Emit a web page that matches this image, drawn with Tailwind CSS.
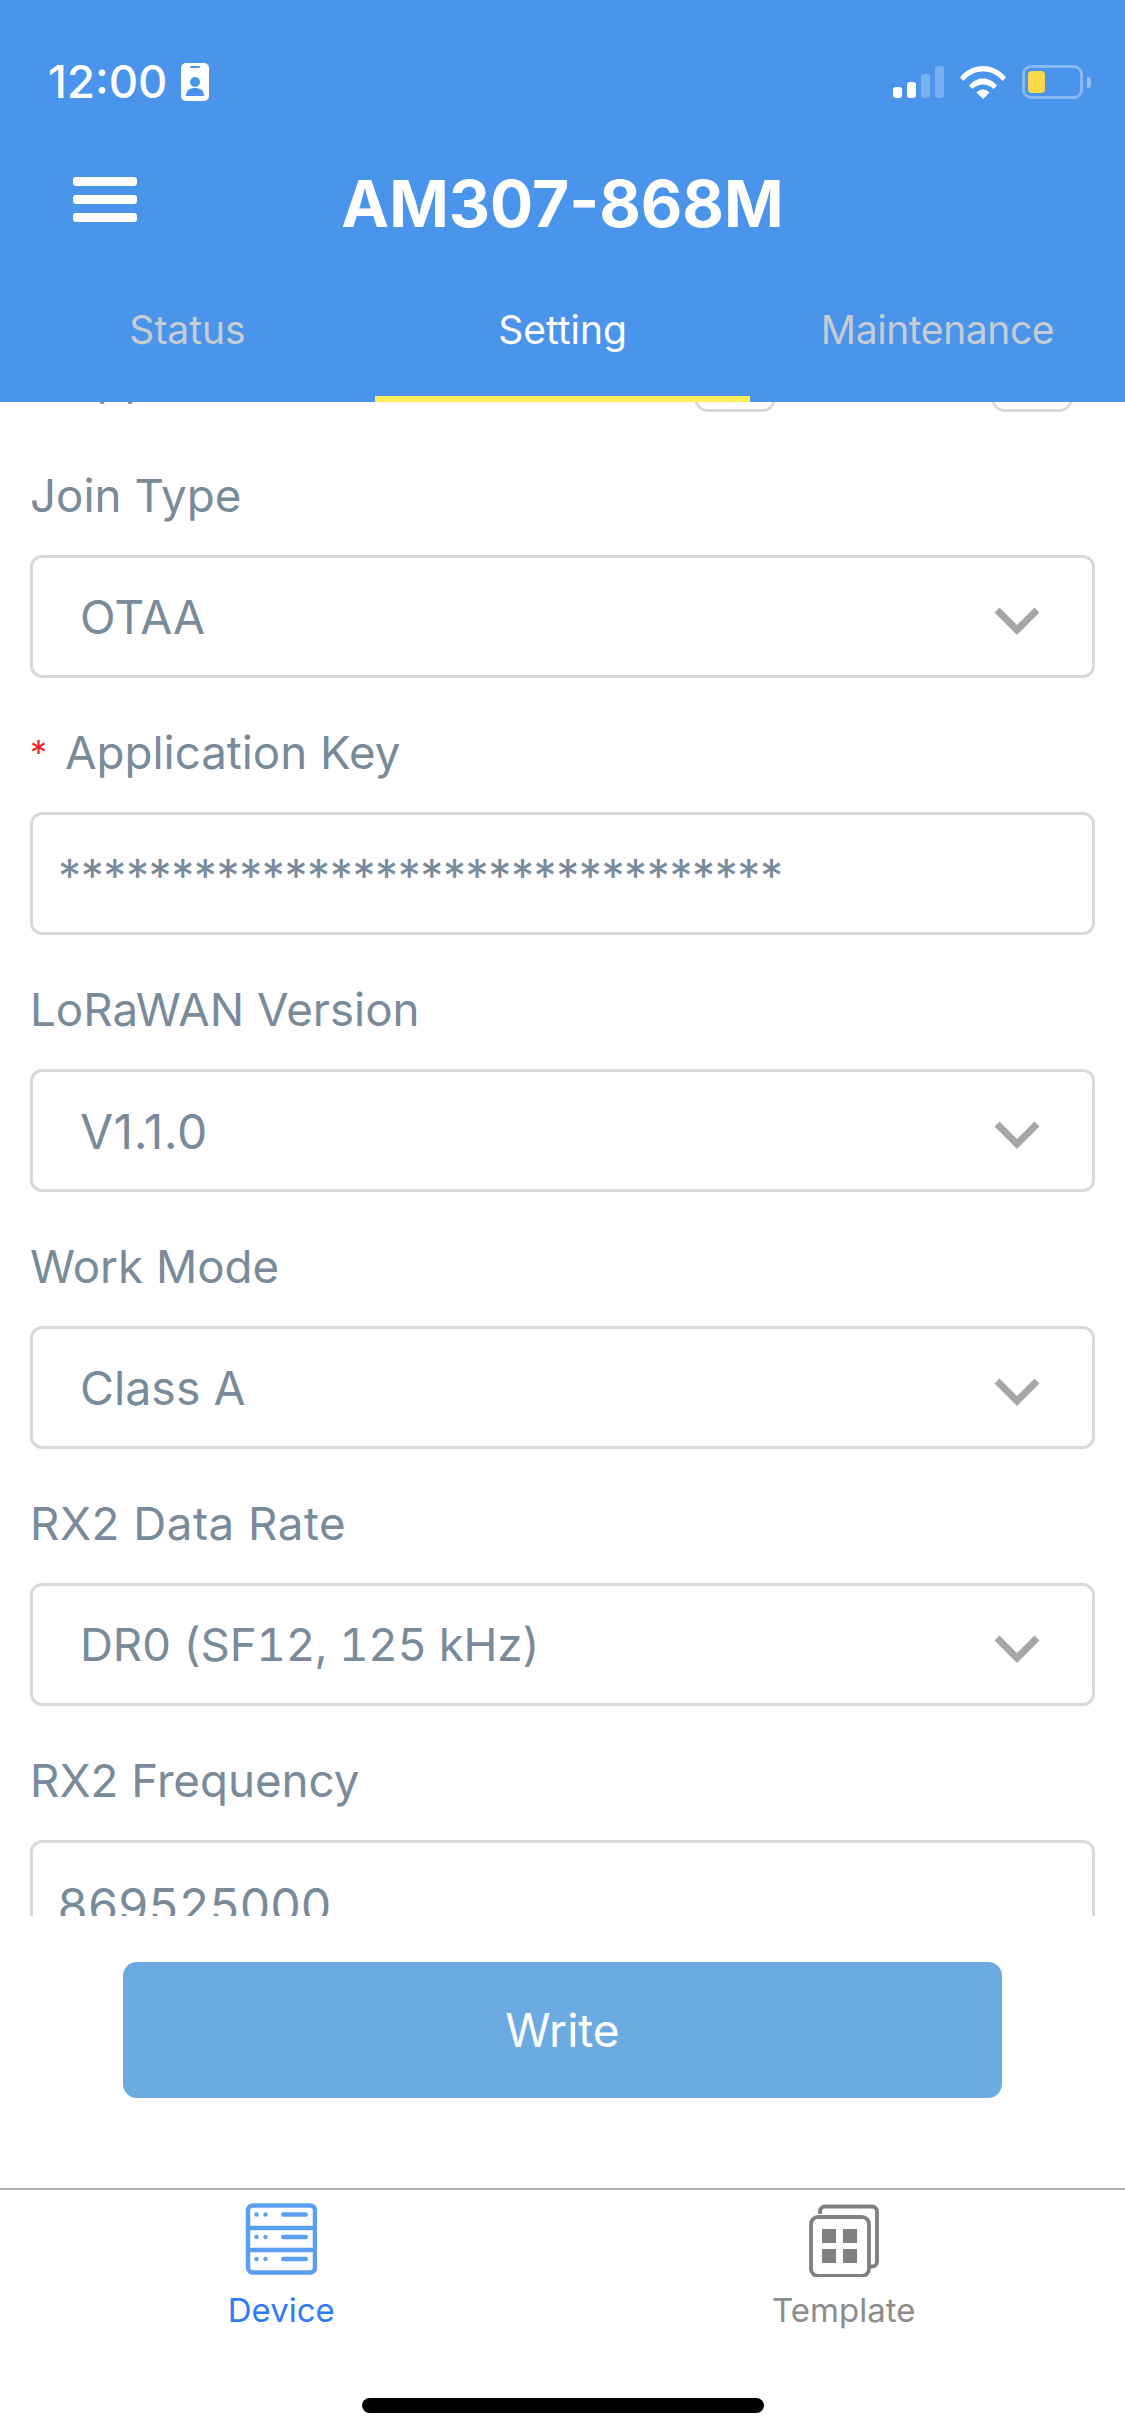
<!doctype html>
<html><head><meta charset="utf-8"><script src="https://cdn.jsdelivr.net/npm/@tailwindcss/browser@4"></script></head>
<body class="m-0">
<div class="w-[1125px] h-[2436px] bg-white flex flex-col overflow-hidden font-['Inter','Liberation_Sans',sans-serif]">
  <header class="h-[402px] bg-[#4a94ec] shrink-0 flex flex-col z-10">
    <div class="h-[130px] pl-[48px] pr-[34px] pt-[59px] flex items-start justify-between">
      <div class="flex items-center gap-[14px] text-white">
        <span class="text-[45.5px] leading-[46px] font-medium">12:00</span>
        <svg width="28" height="38" viewBox="0 0 28 38"><rect width="28" height="38" rx="5" fill="#fff"/><rect x="9" y="3" width="10" height="2" rx="1" fill="#4a94ec"/><circle cx="14" cy="19" r="5" fill="#4a94ec"/><path d="M5 33c0-6 4-8 9-8s9 2 9 8z" fill="#4a94ec"/></svg>
      </div>
      <div class="flex items-center gap-[16px] pt-[6px]">
        <svg width="51" height="32" viewBox="0 0 51 32"><rect x="0" y="21" width="9" height="11" rx="3" fill="#fff"/><rect x="14" y="16" width="9" height="16" rx="3" fill="#fff"/><rect x="28" y="8" width="9" height="24" rx="3" fill="#fff" fill-opacity=".25"/><rect x="42" y="0" width="9" height="32" rx="3" fill="#fff" fill-opacity=".25"/></svg>
        <svg width="46" height="33" viewBox="0 0 46 33"><path d="M0 11.5C6 4 14 0 23 0s17 4 23 11.5l-3.5 3.5C37 8.500 30.500 5.500 23 5.500S9 8.500 3.500 15z" fill="#fff"/><path d="M9 19.500C13 15 18 12.500 23 12.500s10 2.500 14 7l-3.500 3.500C30.500 20 27 18.500 23 18.500S15.500 20 12.500 23z" fill="#fff"/><path d="M16.500 26.500C18.500 24.500 20.500 23.500 23 23.500s4.500 1 6.500 3L23 33z" fill="#fff"/></svg>
        <div class="flex items-center gap-[4px]">
          <div class="w-[61px] h-[34px] rounded-[9px] border-[3px] border-white/35 p-[3px]"><div class="w-[17px] h-[22px] rounded-[4px] bg-[#fad84a]"></div></div>
          <div class="w-[4px] h-[11px] rounded-r-[3px] bg-white/40"></div>
        </div>
      </div>
    </div>
    <div class="h-[134px] relative flex items-center justify-center pt-[14px]">
      <div class="absolute left-[73px] top-[47px] flex flex-col gap-[9px]"><div class="w-[64px] h-[9px] rounded-[3px] bg-white"></div><div class="w-[64px] h-[9px] rounded-[3px] bg-white"></div><div class="w-[64px] h-[9px] rounded-[3px] bg-white"></div></div>
      <h1 class="text-white text-[64px] leading-[80px] font-bold">AM307-868M</h1>
    </div>
    <nav class="flex-1 grid grid-cols-3 text-[39px]">
      <div class="flex items-center justify-center pb-[6px] text-[#c6ccd2]">Status</div>
      <div class="flex items-center justify-center text-white border-b-[6px] border-[#ffee58]">Setting</div>
      <div class="flex items-center justify-center pb-[6px] text-[#c6ccd2] tracking-[-0.4px]">Maintenance</div>
    </nav>
  </header>
  <main class="h-[1514px] shrink-0 overflow-hidden text-[#798b9b] text-[45.7px]">
    <div class="h-[10px] relative">
      <div class="absolute left-[30px] bottom-[5px] leading-[56px] whitespace-nowrap"><span class="text-[#f5222d] text-[34px] align-top mr-[18px]">*</span>Application Port</div>
      <div class="absolute left-[694px] bottom-0 w-[82px] h-[40px] rounded-[14px] border-[3px] border-[#d9d9d9]"></div>
      <div class="absolute left-[991px] bottom-0 w-[82px] h-[40px] rounded-[14px] border-[3px] border-[#d9d9d9]"></div>
    </div>
    <div class="px-[30px] flex flex-col gap-[47px] pt-[56px]">
      <section class="flex flex-col gap-[31px]"><div class="leading-[56px] h-[56px]">Join Type</div>
        <div class="h-[123px] rounded-[12px] border-[3px] border-[#d9d9d9] pl-[47px] pr-[52px] pt-[2px] flex items-center justify-between text-[46.5px]">OTAA<svg class="mt-[6px]" width="46" height="28" viewBox="0 0 46 28"><path d="M3 3l20 20L43 3" fill="none" stroke="#a6a6a6" stroke-width="7"/></svg></div></section>
      <section class="flex flex-col gap-[31px]"><div class="leading-[56px] h-[56px]"><span class="text-[#f5222d] text-[34px] align-top mr-[18px]">*</span>Application Key</div>
        <div class="h-[123px] rounded-[12px] border-[3px] border-[#d9d9d9] pl-[25px] pt-[6px] flex items-center text-[46px] tracking-[-0.4px]">********************************</div></section>
      <section class="flex flex-col gap-[31px]"><div class="leading-[56px] h-[56px]">LoRaWAN Version</div>
        <div class="h-[123px] rounded-[12px] border-[3px] border-[#d9d9d9] pl-[47px] pr-[52px] pt-[2px] flex items-center justify-between text-[48px] tracking-[0.5px]">V1.1.0<svg class="mt-[6px]" width="46" height="28" viewBox="0 0 46 28"><path d="M3 3l20 20L43 3" fill="none" stroke="#a6a6a6" stroke-width="7"/></svg></div></section>
      <section class="flex flex-col gap-[31px]"><div class="leading-[56px] h-[56px]">Work Mode</div>
        <div class="h-[123px] rounded-[12px] border-[3px] border-[#d9d9d9] pl-[47px] pr-[52px] pt-[2px] flex items-center justify-between text-[46.5px]">Class A<svg class="mt-[6px]" width="46" height="28" viewBox="0 0 46 28"><path d="M3 3l20 20L43 3" fill="none" stroke="#a6a6a6" stroke-width="7"/></svg></div></section>
      <section class="flex flex-col gap-[31px]"><div class="leading-[56px] h-[56px] tracking-[0.5px]">RX2 Data Rate</div>
        <div class="h-[123px] rounded-[12px] border-[3px] border-[#d9d9d9] pl-[47px] pr-[52px] pt-[2px] flex items-center justify-between tabular-nums tracking-[-0.3px]">DR0 (SF12, 125 kHz)<svg class="mt-[6px]" width="46" height="28" viewBox="0 0 46 28"><path d="M3 3l20 20L43 3" fill="none" stroke="#a6a6a6" stroke-width="7"/></svg></div></section>
      <section class="flex flex-col gap-[31px]"><div class="leading-[56px] h-[56px]">RX2 Frequency</div>
        <div class="h-[123px] rounded-[12px] border-[3px] border-[#d9d9d9] pl-[24px] pt-[8px] flex items-center text-[48px] tabular-nums tracking-[-0.7px]">869525000</div></section>
    </div>
  </main>
  <div class="h-[272px] shrink-0 flex justify-center pt-[46px]">
    <button class="w-[879px] h-[136px] rounded-[14px] bg-[#6cabe2] text-white text-[46px]">Write</button>
  </div>
  <footer class="flex-1 border-t-[2px] border-[#b3b3b3] grid grid-cols-2 relative text-[33px]">
    <div class="flex flex-col items-center pt-[13px] gap-[13px] text-[#2f7bf5]">
      <svg width="72" height="74" viewBox="0 0 72 74"><g fill="none" stroke="#5b9ff0" stroke-width="4.500"><rect x="3" y="2.500" width="67" height="67" rx="5"/><path d="M3 25h67M3 47h67"/></g><g fill="#5b9ff0"><circle cx="11.500" cy="11.500" r="2.200"/><circle cx="20.500" cy="11.500" r="2.200"/><rect x="36" y="9.200" width="27" height="4.600" rx="2.300"/><circle cx="11.500" cy="34" r="2.200"/><circle cx="20.500" cy="34" r="2.200"/><rect x="36" y="31.700" width="27" height="4.600" rx="2.300"/><circle cx="11.500" cy="56" r="2.200"/><circle cx="20.500" cy="56" r="2.200"/><rect x="36" y="53.700" width="27" height="4.600" rx="2.300"/></g></svg>
      <span class="leading-[40px]">Device</span>
    </div>
    <div class="flex flex-col items-center pt-[13px] gap-[13px] text-[#8c8c8c]">
      <svg width="72" height="74" viewBox="0 0 72 74"><g fill="none" stroke="#808080" stroke-width="3.800"><path d="M12 11V8.500a5 5 0 0 1 5-5h47a5 5 0 0 1 5 5v50a5 5 0 0 1-5 5h-2"/><rect x="3" y="14" width="58" height="59" rx="7"/></g><g fill="#808080"><rect x="14" y="26" width="14" height="14"/><rect x="35" y="26" width="14" height="14"/><rect x="14" y="46" width="14" height="14"/><rect x="35" y="46" width="14" height="14"/></g></svg>
      <span class="leading-[40px]">Template</span>
    </div>
    <div class="absolute left-[362px] top-[208px] w-[402px] h-[15px] rounded-full bg-black"></div>
  </footer>
</div>
</body></html>
